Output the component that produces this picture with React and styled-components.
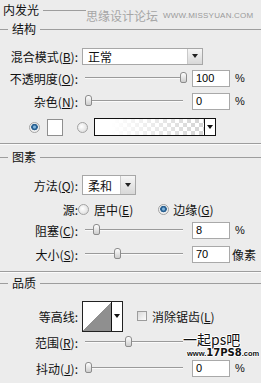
import React from "react";
import styled, { createGlobalStyle } from "styled-components";

const GlobalStyle = createGlobalStyle`
  html, body {
    margin: 0;
    padding: 0;
    background: #ececec;
  }
  body {
    font-family: "Noto Sans CJK SC", "Noto Sans", sans-serif;
    font-size: 12px;
    color: #111;
  }
`;

const Panel = styled.div`
  position: relative;
  width: 261px;
  height: 383px;
  overflow: hidden;
  background: #ececec;
  display: flex;
  flex-direction: column;
`;

// titre de groupe avec la ligne grise
const Legend = styled.div`
  display: flex;
  align-items: center;
  height: 16px;
  margin-top: ${(p) => p.$mt || 0}px;
  padding-left: ${(p) => (p.$lead ? 0 : 3)}px;
  line-height: 16px;
  white-space: nowrap;
  &::before {
    content: "";
    display: ${(p) => (p.$lead ? "block" : "none")};
    width: 8px;
    height: 1px;
    margin-right: 4px;
    background: #9d9d9d;
  }
  &::after {
    content: "";
    flex: 1;
    height: 1px;
    margin-left: 4px;
    background: #9d9d9d;
  }
`;

const Separator = styled.div`
  height: 1px;
  margin-top: ${(p) => p.$mt || 0}px;
  background: #9d9d9d;
  border-bottom: 1px solid #fbfbfb;
`;

const Row = styled.div`
  display: flex;
  align-items: center;
  height: ${(p) => p.$h || 20}px;
  margin-top: ${(p) => p.$mt || 0}px;
  padding-left: ${(p) => p.$indent || 0}px;
  white-space: nowrap;
`;

const Label = styled.span`
  flex: none;
  width: 78px;
  margin-right: ${(p) => (p.$gap === undefined ? 4 : p.$gap)}px;
  text-align: right;
`;

const U = styled.span`
  text-decoration: underline;
`;

const Select = styled.div`
  display: flex;
  flex: none;
  width: ${(p) => p.$w}px;
  height: ${(p) => p.$h || 17}px;
  box-sizing: border-box;
  background: #fff;
  border: 1px solid #a7a7a7;
`;

const SelectText = styled.span`
  flex: 1;
  padding-left: 5px;
  display: flex;
  align-items: center;
`;

const DropButton = styled.span`
  width: 14px;
  display: flex;
  align-items: center;
  justify-content: center;
  border-left: 1px solid #c9c9c9;
  background: linear-gradient(#f6f6f6, #d8d8d8);
  &::after {
    content: "";
    border-left: 3px solid transparent;
    border-right: 3px solid transparent;
    border-top: 4px solid #222;
  }
`;

const Slider = styled.div`
  position: relative;
  flex: none;
  width: 106px;
  height: 12px;
  &::before {
    content: "";
    position: absolute;
    left: 3px;
    right: 5px;
    top: 5px;
    height: 1px;
    background: #9a9a9a;
    box-shadow: 0 1px 0 #fafafa;
  }
`;

const Thumb = styled.span`
  position: absolute;
  top: 0;
  width: 7px;
  height: 11px;
  box-sizing: border-box;
  border: 1px solid #8c8c8c;
  border-radius: 3px 3px 2px 2px;
  background: linear-gradient(#ffffff, #cdcdcd);
`;

const NumInput = styled.div`
  flex: none;
  width: 38px;
  height: 17px;
  margin-left: 4px;
  box-sizing: border-box;
  padding-left: 3px;
  background: #fff;
  border: 1px solid #a9a9a9;
  font-family: "Liberation Sans", Arial, sans-serif;
  font-size: 11px;
  line-height: 15px;
  color: #000;
`;

const Unit = styled.span`
  margin-left: ${(p) => p.$ml || 5}px;
  font-family: ${(p) => (p.$latin ? '"Liberation Sans", Arial, sans-serif' : "inherit")};
  font-size: ${(p) => (p.$latin ? 11 : 12)}px;
`;

const Radio = styled.span`
  flex: none;
  width: 11px;
  height: 11px;
  margin-left: ${(p) => p.$ml || 0}px;
  box-sizing: border-box;
  border-radius: 50%;
  border: 1px solid #a3a3a3;
  background: ${(p) =>
    p.$on
      ? "radial-gradient(circle at 50% 45%, #7fb4dc 0 1px, #2a6192 2px 3px, #f0f0f0 3.6px)"
      : "radial-gradient(circle at 40% 40%, #ffffff, #d6d6d6)"};
`;

const Swatch = styled.span`
  flex: none;
  width: 16px;
  height: 17px;
  margin-left: 7px;
  box-sizing: border-box;
  background: #fff;
  border: 1px solid #8f8f8f;
`;

const GradientPicker = styled.div`
  display: flex;
  flex: none;
  width: 122px;
  height: 18px;
  margin-left: 6px;
  box-sizing: border-box;
  border: 1px solid #111;
`;

const GradientStrip = styled.span`
  flex: 1;
  background: linear-gradient(to right, #fff 15%, rgba(255, 255, 255, 0) 95%),
    repeating-conic-gradient(#d6d6d6 0 25%, #fff 0 50%) 0 0 / 8px 8px;
`;

const PickerButton = styled.span`
  width: 10px;
  display: flex;
  align-items: center;
  justify-content: center;
  border-left: 1px solid #111;
  background: #fff;
  &::after {
    content: "";
    border-left: 3px solid transparent;
    border-right: 3px solid transparent;
    border-top: 4px solid #111;
  }
`;

const Text = styled.span`
  margin-left: ${(p) => p.$ml || 0}px;
`;

const Contour = styled.div`
  display: flex;
  flex: none;
  width: 41px;
  height: 31px;
  box-sizing: border-box;
  border: 1px solid #222;
`;

const ContourCurve = styled.span`
  flex: 1;
  background: linear-gradient(to top left, #8f8f8f 50%, #fff 50%);
`;

const CheckBox = styled.span`
  flex: none;
  width: 10px;
  height: 10px;
  margin-left: 14px;
  box-sizing: border-box;
  border: 1px solid #9c9c9c;
  background: linear-gradient(135deg, #d9d9d9, #fbfbfb);
`;

const TopMark = styled.div`
  position: absolute;
  left: 86px;
  top: 8px;
  right: 0;
  height: 14px;
  display: flex;
  align-items: center;
  background: #ececec;
  color: #a6a6a6;
  white-space: nowrap;
`;

const MarkLatin = styled.span`
  margin-left: 5px;
  font-family: "Liberation Sans", Arial, sans-serif;
  font-size: 8px;
  letter-spacing: 0.2px;
  color: #9a9a9a;
`;

const BottomMark = styled.div`
  position: absolute;
  left: 183px;
  top: 332px;
  width: 78px;
  height: 28px;
  background: #ececec;
  color: #111;
  white-space: nowrap;
  text-shadow: 1px 0 #fff, -1px 0 #fff, 0 1px #fff, 0 -1px #fff;
`;

const MarkLine = styled.div`
  height: ${(p) => p.$h}px;
  padding-left: ${(p) => p.$pl || 0}px;
  font-size: ${(p) => p.$size}px;
  line-height: ${(p) => p.$h}px;
  font-weight: ${(p) => p.$weight || 400};
  font-family: ${(p) => (p.$latin ? '"Liberation Sans", Arial, sans-serif' : "inherit")};
`;

const Big = styled.span`
  font-family: "DejaVu Sans", sans-serif;
  font-size: 10px;
  font-weight: 800;
`;

const slider = (pos) => (
  <Slider>
    <Thumb style={{ left: `${3 + Math.round(pos * 95)}px` }} />
  </Slider>
);

const App = () => {
  return (
    <>
      <GlobalStyle />
      <Panel>
        <Legend $mt={2}>内发光</Legend>
        <Legend $mt={3} $lead>结构</Legend>

        <Row $mt={9}>
          <Label>混合模式(<U>B</U>):</Label>
          <Select $w={121}>
            <SelectText>正常</SelectText>
            <DropButton />
          </Select>
        </Row>
        <Row $mt={2}>
          <Label>不透明度(<U>O</U>):</Label>
          {slider(1)}
          <NumInput>100</NumInput>
          <Unit $latin>%</Unit>
        </Row>
        <Row $mt={3}>
          <Label>杂色(<U>N</U>):</Label>
          {slider(0)}
          <NumInput>0</NumInput>
          <Unit $latin>%</Unit>
        </Row>
        <Row $mt={6} $indent={29}>
          <Radio $on />
          <Swatch />
          <Radio $ml={14} />
          <GradientPicker>
            <GradientStrip />
            <PickerButton />
          </GradientPicker>
        </Row>

        <Separator $mt={6} />
        <Legend $mt={4} $lead>图素</Legend>

        <Row $mt={10}>
          <Label>方法(<U>Q</U>):</Label>
          <Select $w={54} $h={20}>
            <SelectText>柔和</SelectText>
            <DropButton />
          </Select>
        </Row>
        <Row $mt={4}>
          <Label $gap={0}>源:</Label>
          <Radio />
          <Text $ml={5}>居中(<U>E</U>)</Text>
          <Radio $on $ml={25} />
          <Text $ml={4}>边缘(<U>G</U>)</Text>
        </Row>
        <Row $mt={1}>
          <Label>阻塞(<U>C</U>):</Label>
          {slider(0.08)}
          <NumInput>8</NumInput>
          <Unit $latin>%</Unit>
        </Row>
        <Row $mt={4}>
          <Label>大小(<U>S</U>):</Label>
          {slider(0.3)}
          <NumInput>70</NumInput>
          <Unit $ml={2}>像素</Unit>
        </Row>

        <Separator $mt={7} />
        <Legend $mt={2} $lead>品质</Legend>

        <Row $mt={9} $h={32}>
          <Label>等高线:</Label>
          <Contour>
            <ContourCurve />
            <PickerButton />
          </Contour>
          <CheckBox />
          <Text $ml={5}>消除锯齿(<U>L</U>)</Text>
        </Row>
        <Row>
          <Label>范围(<U>R</U>):</Label>
          {slider(0.42)}
        </Row>
        <Row $mt={6}>
          <Label>抖动(<U>J</U>):</Label>
          {slider(0)}
          <NumInput>0</NumInput>
          <Unit $latin>%</Unit>
        </Row>

        <TopMark>
          思缘设计论坛
          <MarkLatin>WWW.MISSYUAN.COM</MarkLatin>
        </TopMark>
        <BottomMark>
          <MarkLine $h={14} $size={14}>一起ps吧</MarkLine>
          <MarkLine $h={13} $size={7.5} $pl={4} $weight={700} $latin>
            www.<Big>17PS8</Big>.com
          </MarkLine>
        </BottomMark>
      </Panel>
    </>
  );
};

export default App;
